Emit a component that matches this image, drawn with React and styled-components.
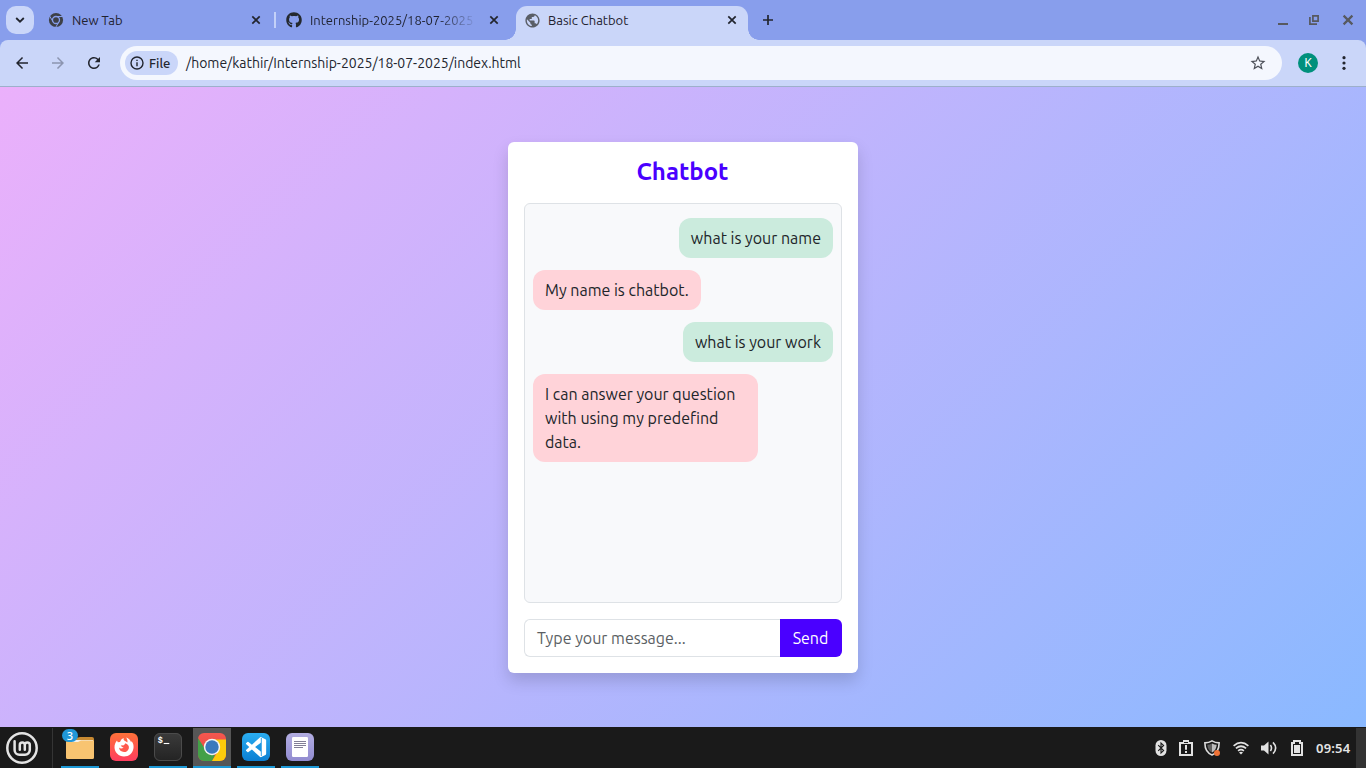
import React from "react";
import styled, { createGlobalStyle, css } from "styled-components";
import { MdPublic, MdArrowBack, MdArrowForward, MdRefresh, MdStarBorder } from "react-icons/md";
import { FaGithub } from "react-icons/fa";

const Global = createGlobalStyle`
  * { box-sizing: border-box; }
  body { margin: 0; overflow: hidden; font-family: Ubuntu, "Noto Sans", sans-serif; }
  svg { display: block; flex: none; }
`;

const Desktop = styled.div`
  width: 1366px;
  height: 768px;
  display: flex;
  flex-direction: column;
  overflow: hidden;
`;

/* ---------- Browser chrome ---------- */
const TabStrip = styled.div`
  height: 40px;
  flex: none;
  display: flex;
  padding: 6px 10px 0 6px;
  background: #889eec;
`;
const TabSearch = styled.div`
  width: 28px;
  height: 28px;
  margin-right: 6px;
  border-radius: 10px;
  background: #cad6f9;
  display: grid;
  place-items: center;
`;
const Tab = styled.div`
  position: relative;
  width: 232px;
  height: 34px;
  padding: 0 8px 6px;
  display: flex;
  align-items: center;
  gap: 8px;
  color: #1f2230;
  ${(p) => p.$active && css`
    margin-left: 6px;
    background: #cad6f9;
    border-radius: 11px 11px 0 0;
    &::before, &::after {
      content: "";
      position: absolute;
      bottom: 0;
      width: 11px;
      height: 11px;
    }
    &::before { left: -11px; background: radial-gradient(circle at 0 0, transparent 10.5px, #cad6f9 11px); }
    &::after { right: -11px; background: radial-gradient(circle at 100% 0, transparent 10.5px, #cad6f9 11px); }
  `}
`;
const TabTitle = styled.span`
  flex: 1;
  overflow: hidden;
  white-space: nowrap;
  font-size: 13px;
  line-height: 20px;
  ${(p) => p.$fade && css`mask-image: linear-gradient(90deg, #000 76%, transparent 100%);`}
`;
const Globe = styled(MdPublic)`
  margin: 0 -0.5px;
`;
const TabDivider = styled.div`
  width: 2px;
  height: 16px;
  margin: 6px 2px 0;
  background: #c3d0f8;
`;
const NewTab = styled.div`
  width: 16px;
  height: 28px;
  margin-left: 12px;
  display: grid;
  place-items: center;
`;
const WindowControls = styled.div`
  margin-left: auto;
  height: 28px;
  display: flex;
  align-items: center;
  gap: 20px;
`;
const ToolbarBack = styled.div`
  flex: none;
  background: #889eec;
`;
const Toolbar = styled.div`
  height: 47px;
  display: flex;
  align-items: center;
  padding: 0 14px 0 13px;
  background: #cad6f9;
  border-bottom: 1px solid #9db0cb;
  border-radius: 8px 8px 0 0;
`;
const NavButtons = styled.div`
  display: flex;
  gap: 18px;
  width: 107px;
  color: #22252e;
`;
const Omnibox = styled.div`
  width: 1162px;
  height: 34px;
  padding: 0 15px 0 5px;
  display: flex;
  align-items: center;
  border-radius: 17px;
  background: #f4f7fe;
  color: #22252e;
`;
const Chip = styled.div`
  width: 53px;
  height: 24px;
  padding-left: 5px;
  display: flex;
  align-items: center;
  gap: 5px;
  border-radius: 12px;
  background: #cad6f9;
  font-size: 13px;
  font-weight: 500;
`;
const Address = styled.span`
  flex: 1;
  margin-left: 8px;
  font-size: 14px;
  letter-spacing: -0.015px;
`;
const Avatar = styled.div`
  width: 20px;
  height: 20px;
  margin: 0 16px 0 16px;
  border-radius: 50%;
  background: #00907c;
  color: #fff;
  font: 400 12px/20px "Noto Sans", sans-serif;
  text-align: center;
`;

/* ---------- Chat page ---------- */
const Page = styled.main`
  flex: 1;
  display: flex;
  align-items: center;
  justify-content: center;
  background: linear-gradient(135deg, #ebb0fb, #8ab9ff);
`;
const Card = styled.section`
  width: 350px;
  height: 531px;
  padding: 16px;
  border-radius: 6px;
  background: #fff;
  box-shadow: 0 8px 16px rgba(0, 0, 0, 0.15);
  display: flex;
  flex-direction: column;
`;
const Title = styled.h4`
  margin: 0 0 17px;
  padding-right: 1px;
  font-size: 24px;
  line-height: 28px;
  font-weight: 600;
  text-align: center;
  color: #4a00ff;
`;
const ChatLog = styled.div`
  height: 400px;
  padding: 8px;
  border: 1px solid #dee2e6;
  border-radius: 6px;
  background: #f8f9fb;
  display: flex;
  flex-direction: column;
  align-items: flex-start;
`;
const Bubble = styled.div`
  max-width: 75%;
  margin: 6px 0;
  padding: 8px 12px;
  border-radius: 12px;
  align-self: ${(p) => (p.$mine ? "flex-end" : "flex-start")};
  background: ${(p) => (p.$mine ? "#cbebdd" : "#ffd3d9")};
  color: #212529;
  font-size: 16px;
  line-height: 24px;
`;
const Composer = styled.div`
  height: 38px;
  margin-top: 16px;
  display: flex;
  font-size: 16px;
  line-height: 24px;
`;
const MessageField = styled.div`
  width: 256px;
  padding: 6px 12px;
  border: 1px solid #dee2e6;
  border-right: 0;
  border-radius: 6px 0 0 6px;
  color: #5b5f64;
`;
const SendButton = styled.div`
  width: 62px;
  padding: 7px 1px 7px 0;
  border-radius: 0 6px 6px 0;
  background: #4a00ff;
  color: #fff;
  text-align: center;
`;

/* ---------- Taskbar ---------- */
const Taskbar = styled.footer`
  height: 41px;
  flex: none;
  display: flex;
  align-items: stretch;
  padding-top: 1px;
  background: #1a1a1a;
`;
const MenuButton = styled.div`
  width: 53px;
  margin-right: 8px;
  padding: 3px 0 0 5px;
  border-right: 1px solid #353535;
`;
const Apps = styled.div`
  display: flex;
  gap: 6px;
`;
const AppButton = styled.div`
  position: relative;
  width: 38px;
  padding: 5px 5px 0;
  background: ${(p) => (p.$focused ? "#565656" : "transparent")};
  border-bottom: 2px solid ${(p) => (p.$open ? "#1d99d6" : "transparent")};
`;
const Count = styled.span`
  position: absolute;
  left: 1px;
  top: 1px;
  width: 16px;
  height: 13px;
  border-radius: 7px;
  background: #2097d8;
  color: #fff;
  font: 500 11px/13px "Noto Sans", sans-serif;
  text-align: center;
`;
const Tray = styled.div`
  margin-left: auto;
  display: flex;
  align-items: center;
`;
const TraySlot = styled.div`
  width: ${(p) => p.$width}px;
  display: grid;
  place-items: center;
`;
const Clock = styled.span`
  width: 45px;
  padding-left: 5px;
  color: #e4e4e4;
  font: 600 13px/16px "Noto Sans", sans-serif;
  letter-spacing: 0.2px;
`;
const Corner = styled.div`
  width: 10px;
  background: #333;
`;

const Close = ({ size = 16, color = "#22252e", reach = 3.7, weight = 1.7 }) => (
  <svg width={size} height={size} viewBox="-8 -8 16 16" stroke={color} strokeWidth={weight}>
    <path d={`M${-reach} ${-reach}L${reach} ${reach}M${reach} ${-reach}L${-reach} ${reach}`} />
  </svg>
);

const GreyChrome = () => (
  <svg width="16" height="16" viewBox="0 0 16 16">
    <circle cx="8" cy="8" r="7.1" fill="#3d4047" />
    <g stroke="#889eec" strokeWidth="1" fill="none">
      <circle cx="8" cy="8" r="3.5" strokeWidth="1.3" />
      <path d="M8 4.5H15M5 9.7L1.5 3.8M11 9.7L7.4 15.8" />
    </g>
  </svg>
);

const Tile = ({ id, top, bottom, children }) => (
  <svg width="28" height="28" viewBox="0 0 28 28">
    <defs>
      <linearGradient id={id} x2="0" y2="1">
        <stop stopColor={top} />
        <stop offset="1" stopColor={bottom} />
      </linearGradient>
      <clipPath id={`${id}Clip`}><rect width="28" height="28" rx="6" /></clipPath>
    </defs>
    <rect width="28" height="28" rx="6" fill={`url(#${id})`} />
    {children}
  </svg>
);

const MintLogo = () => (
  <svg width="34" height="34" viewBox="0 0 34 34" fill="none" stroke="#e4e4e4" strokeLinecap="round">
    <circle cx="17" cy="17" r="14.7" strokeWidth="2.5" />
    <path d="M9.6 10.2V19a4.8 4.8 0 0 0 4.8 4.8H20a4.8 4.8 0 0 0 4.8-4.8V14a2.5 2.5 0 0 0-5 0V18.8M19.8 14a2.5 2.5 0 0 0-5 0V18.8" strokeWidth="2.5" />
  </svg>
);

const FolderIcon = () => (
  <svg width="28" height="28" viewBox="0 0 28 28">
    <path d="M0 6V4.5H12L14 4H26a2 2 0 0 1 2 2V12H0z" fill="#c88a32" />
    <path d="M3 7H27V12H3z" fill="#f2f0ec" />
    <path d="M0 9H12L15 7.5H28V24.5a1.5 1.5 0 0 1-1.5 1.5H1.5A1.5 1.5 0 0 1 0 24.5z" fill="#f8c471" />
  </svg>
);

const FirefoxIcon = () => (
  <Tile id="fox" top="#ff7139" bottom="#ff3d5f">
    <path d="M7 7.6L7.8 9.2L10 9C10.8 7.4 11.5 5.6 13.8 5C13.2 6.4 13.7 7.4 15.2 8L17.4 9.4C17.8 7.8 17.2 6.2 16.2 4.4C18.6 5.1 20.2 6.8 21 9L21.8 8.3C23.3 10.6 23.8 12.7 23.5 15C22.9 20 19 23.5 14 23.5C8.7 23.5 4.7 19.6 4.5 14.6C4.4 11.9 5.4 9.4 7 7.6z" fill="#fff" />
    <path d="M15.5 10.2C18.2 11.2 19.4 13.2 18.8 15.4C18.1 17.8 16.2 19 14 19C11.2 19 9.1 17.1 9 14.6C10.2 15.8 12.2 15.8 13.6 14.4L12 13.9L10.7 12.5L13.9 12.2z" fill="#ff5a4d" />
  </Tile>
);

const TerminalIcon = () => (
  <Tile id="term" top="#3b3b3b" bottom="#232323">
    <rect x="0.5" y="0.5" width="27" height="27" rx="5.5" fill="none" stroke="#4b4b4b" />
    <text x="3.7" y="9.5" fill="#fff" fontSize="8.5" fontWeight="700" fontFamily="Liberation Mono, monospace">$</text>
    <path d="M9.7 10.5H15.3" stroke="#fff" strokeWidth="1.1" />
  </Tile>
);

const ChromeIcon = () => (
  <Tile id="chr" top="#f5574f" bottom="#e5473f">
    <g clipPath="url(#chrClip)">
      <path d="M0 5L9 19L17 22L14 28H0z" fill="#43a047" />
      <path d="M14 6.5H28V28H14L20 18z" fill="#fccb0b" />
    </g>
    <circle cx="14" cy="14" r="8.2" fill="#f4f4f4" />
    <circle cx="14" cy="14" r="6.7" fill="#3a79bd" />
  </Tile>
);

const CodeIcon = () => (
  <Tile id="code" top="#2badf0" bottom="#0b7fd3">
    <path
      transform="translate(4 4) scale(.84)"
      fill="#fff"
      d="M23.15 2.587L18.21.21a1.494 1.494 0 0 0-1.705.29l-9.46 8.63-4.12-3.128a.999.999 0 0 0-1.276.057L.327 7.261A1 1 0 0 0 .326 8.74L3.899 12 .326 15.26a1 1 0 0 0 .001 1.479L1.65 17.94a.999.999 0 0 0 1.276.057l4.12-3.128 9.46 8.63a1.492 1.492 0 0 0 1.704.29l4.942-2.377A1.5 1.5 0 0 0 24 20.06V3.939a1.5 1.5 0 0 0-.85-1.352zm-5.146 14.861L10.826 12l7.178-5.448v10.896z"
    />
    <path d="M19.3 5V23" stroke="#1c94e0" strokeWidth="0.9" />
  </Tile>
);

const NotesIcon = () => (
  <Tile id="notes" top="#b3aee2" bottom="#918bd0">
    <rect x="6" y="4" width="16" height="20" rx="1.2" fill="#fff" />
    <path d="M8 8.5H20M8 10.5H20M8 12.5H20M8 14.5H17" stroke="#747089" strokeWidth="0.9" />
  </Tile>
);

const BluetoothIcon = () => (
  <svg width="12" height="16" viewBox="0 0 12 16">
    <rect x="0.5" width="11" height="16" rx="5.5" fill="#e2e2e2" />
    <path d="M3.2 5.2L8.6 10.6L6 13V3L8.6 5.4L3.2 10.8" fill="none" stroke="#1a1a1a" strokeWidth="1.1" />
  </svg>
);
const ReportIcon = () => (
  <svg width="14" height="16" viewBox="0 0 14 16">
    <path d="M0 2H4V0H10V2H14V16H0zM2 4V14H12V4zM6 5V9.8H8V5zM6 11V13H8V11zM5 2V3H9V2z" fill="#e2e2e2" fillRule="evenodd" />
  </svg>
);
const ShieldIcon = () => (
  <svg width="16" height="16" viewBox="0 0 16 16">
    <path d="M8 .9C6 2.2 3.2 2.9 .9 2.9C.8 8.5 2.7 12.8 8 15C13.3 12.8 15.2 8.5 15.1 2.9C12.8 2.9 10 2.2 8 .9z" fill="none" stroke="#dcdcdc" strokeWidth="1.6" />
    <path d="M8 3.4C6.5 4.2 4.9 4.6 3.3 4.8C3.6 8.6 5 11 8 12.6z" fill="#5f5f5f" />
    <path d="M8 3.4C9.5 4.2 11.1 4.6 12.7 4.8C12.4 8.6 11 11 8 12.6z" fill="#bdbdbd" />
    <circle cx="13" cy="13" r="3" fill="#ef7337" />
  </svg>
);
const WifiIcon = () => (
  <svg width="16" height="14" viewBox="0 0 16 14" fill="none" stroke="#e2e2e2" strokeWidth="1.7">
    <path d="M.6 4.8Q8-1.5 15.4 4.8M2.9 7.4Q8 3.1 13.1 7.4M5.1 9.9Q8 7.5 10.9 9.9" />
    <path d="M8 13.6L6 11.5Q8 10 10 11.5z" fill="#e2e2e2" stroke="none" />
  </svg>
);
const VolumeIcon = () => (
  <svg width="16" height="14" viewBox="0 0 16 14">
    <path d="M0 4.5H3L7.5.5V13.5L3 9.5H0z" fill="#e2e2e2" />
    <path d="M9.4 4Q11.6 7 9.4 10M12 1.4Q17.3 7 12 12.6" fill="none" stroke="#e2e2e2" strokeWidth="1.6" />
  </svg>
);
const BatteryIcon = () => (
  <svg width="12" height="16" viewBox="0 0 12 16">
    <path d="M0 2H2V0H10V2H12V16H0zM2 4V14H10V4H8V2H4V4z" fill="#e2e2e2" fillRule="evenodd" />
    <path d="M3 5H9V13H3z" fill="#e2e2e2" />
  </svg>
);

const MESSAGES = [
  { mine: true, text: "what is your name" },
  { mine: false, text: "My name is chatbot." },
  { mine: true, text: "what is your work" },
  { mine: false, text: "I can answer your question with using my predefind data." },
];

const APPS = [
  { icon: FolderIcon, open: true, count: 3 },
  { icon: FirefoxIcon },
  { icon: TerminalIcon, open: true },
  { icon: ChromeIcon, open: true, focused: true },
  { icon: CodeIcon, open: true },
  { icon: NotesIcon, open: true },
];

const TRAY = [
  [BluetoothIcon, 29], [ReportIcon, 22], [ShieldIcon, 30], [WifiIcon, 28], [VolumeIcon, 28], [BatteryIcon, 28],
];

export default function App() {
  return (
    <Desktop>
      <Global />
      <TabStrip>
        <TabSearch>
          <svg width="10" height="6" viewBox="0 0 10 6" fill="none" stroke="#22252e" strokeWidth="1.8">
            <path d="M1.2 1L5 4.7L8.8 1" />
          </svg>
        </TabSearch>
        <Tab><GreyChrome /><TabTitle>New Tab</TabTitle><Close /></Tab>
        <TabDivider />
        <Tab>
          <FaGithub size={16} color="#24292f" />
          <TabTitle $fade>Internship-2025/18-07-2025</TabTitle>
          <Close />
        </Tab>
        <Tab $active><Globe size={17} color="#5a5e66" /><TabTitle>Basic Chatbot</TabTitle><Close /></Tab>
        <NewTab>
          <svg width="10" height="10" viewBox="0 0 10 10" stroke="#22252e" strokeWidth="1.7"><path d="M5 0V10M0 5H10" /></svg>
        </NewTab>
        <WindowControls>
          <svg width="10" height="10" viewBox="0 0 10 10"><path d="M0 8H10V10H0z" fill="#57595f" /></svg>
          <svg width="12" height="10" viewBox="0 0 12 10" fill="none" stroke="#57595f" strokeWidth="1.7">
            <path d="M4.9 .9H10.1V6.1H4.9z" />
            <path d="M1.9 2V9.1H9" />
          </svg>
          <Close size={16} color="#57595f" reach={4.4} weight={2.2} />
        </WindowControls>
      </TabStrip>

      <ToolbarBack>
        <Toolbar>
          <NavButtons>
            <MdArrowBack size={18} />
            <MdArrowForward size={18} color="#8c95b0" />
            <MdRefresh size={18} />
          </NavButtons>
          <Omnibox>
            <Chip>
              <svg width="14" height="14" viewBox="0 0 14 14" fill="none" stroke="#22252e" strokeWidth="1.4">
                <circle cx="7" cy="7" r="6" />
                <path d="M7 6.2V10.2M7 3.7V5.1" />
              </svg>
              File
            </Chip>
            <Address>/home/kathir/Internship-2025/18-07-2025/index.html</Address>
            <MdStarBorder size={18} color="#4d5059" />
          </Omnibox>
          <Avatar>K</Avatar>
          <svg width="16" height="16" viewBox="0 0 16 16" fill="#22252e">
            <circle cx="10" cy="2.7" r="1.6" /><circle cx="10" cy="8" r="1.6" /><circle cx="10" cy="13.3" r="1.6" />
          </svg>
        </Toolbar>
      </ToolbarBack>

      <Page>
        <Card>
          <Title>Chatbot</Title>
          <ChatLog>
            {MESSAGES.map((m) => <Bubble key={m.text} $mine={m.mine}>{m.text}</Bubble>)}
          </ChatLog>
          <Composer>
            <MessageField>Type your message...</MessageField>
            <SendButton>Send</SendButton>
          </Composer>
        </Card>
      </Page>

      <Taskbar>
        <MenuButton><MintLogo /></MenuButton>
        <Apps>
          {APPS.map(({ icon: Icon, open, focused, count }, i) => (
            <AppButton key={i} $open={open} $focused={focused}>
              <Icon />
              {count && <Count>{count}</Count>}
            </AppButton>
          ))}
        </Apps>
        <Tray>
          {TRAY.map(([Icon, width], i) => <TraySlot key={i} $width={width}><Icon /></TraySlot>)}
          <Clock>09:54</Clock>
        </Tray>
        <Corner />
      </Taskbar>
    </Desktop>
  );
}
